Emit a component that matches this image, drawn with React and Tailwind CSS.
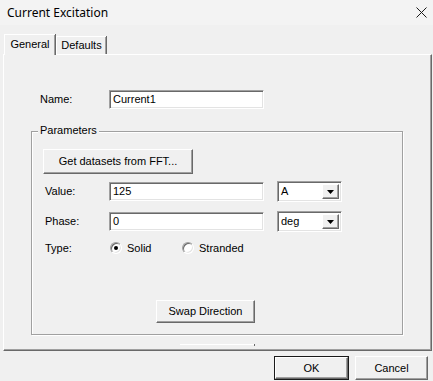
import React from 'react';

// classic win32 3D edges
const sunken = 'border border-t-[#a0a0a0] border-l-[#a0a0a0] border-b-white border-r-white shadow-[inset_1px_1px_0_#696969,inset_-1px_-1px_0_#e3e3e3]';
const raised = 'border border-t-white border-l-white border-b-[#696969] border-r-[#696969] shadow-[inset_-1px_-1px_0_#a0a0a0]';

const Button = ({ children, className = '' }) => (
  <div className={`flex items-center justify-center bg-[#f0f0f0] ${raised} ${className}`}>
    <span className="leading-none">{children}</span>
  </div>
);

const TextBox = ({ value, className = '' }) => (
  <div className={`flex items-center bg-white pl-[3px] ${sunken} ${className}`}>
    <span className="leading-none">{value}</span>
  </div>
);

const Combo = ({ value }) => (
  <div className={`flex h-[21px] w-[65px] items-center justify-between bg-white pl-[3px] pr-[2px] ${sunken}`}>
    <span className="leading-none text-[#000]">{value}</span>
    <div className={`flex h-[15px] w-[17px] items-center justify-center bg-[#f0f0f0] ${raised}`}>
      <svg width="7" height="4" viewBox="0 0 7 4">
        <polygon points="0,0 7,0 3.5,4" fill="#000" />
      </svg>
    </div>
  </div>
);

const Radio = ({ checked, label }) => (
  <div className="flex items-center gap-[5px]">
    <div className="flex h-[12px] w-[12px] items-center justify-center rounded-full border border-t-[#a0a0a0] border-l-[#a0a0a0] border-b-white border-r-white bg-white shadow-[inset_1px_1px_0_#696969,inset_-1px_-1px_0_#e3e3e3]">
      {checked && <div className="h-[4px] w-[4px] rounded-full bg-black" />}
    </div>
    <span className="leading-none">{label}</span>
  </div>
);

export default function App() {
  return (
    <div className="flex h-[381px] w-[433px] flex-col overflow-hidden bg-[#f0f0f0] text-[11px] text-black font-['Liberation_Sans',Arial,sans-serif]">
      {/* title bar */}
      <div className="flex h-[25px] items-center justify-between bg-[#f3f3f3] pl-[7px] pr-[6px]">
        <span className="text-[12px] font-['Noto_Sans','Open_Sans',sans-serif] leading-none">Current Excitation</span>
        <svg width="11" height="11" viewBox="0 0 11 11">
          <path d="M0.5 0.5 L10.5 10.5 M10.5 0.5 L0.5 10.5" stroke="#1a1a1a" strokeWidth="1" />
        </svg>
      </div>

      {/* tabs */}
      <div className="mt-[8px] flex h-[21px] items-end pl-[4px]">
        <div className="relative z-10 -mb-px flex h-[21px] w-[51px] items-start justify-center border-l border-t border-white bg-[#f0f0f0] pt-[4px] shadow-[inset_-1px_0_0_#a0a0a0,1px_0_0_#696969]">
          <span className="leading-none">General</span>
        </div>
        <div className="ml-px flex h-[18px] w-[50px] items-start justify-center border-l border-t border-white pt-[3px] shadow-[inset_-1px_0_0_#a0a0a0,1px_0_0_#696969]">
          <span className="leading-none">Defaults</span>
        </div>
      </div>

      {/* tab panel */}
      <div className="ml-[3px] flex h-[297px] w-[429px] flex-col border border-t-white border-l-white border-b-[#696969] border-r-[#696969] shadow-[inset_-1px_-1px_0_#a0a0a0]">
        <div className="mt-[35px] flex items-center pl-[36px]">
          <span className="w-[69px] leading-none">Name:</span>
          <TextBox value="Current1" className="h-[19px] w-[155px]" />
        </div>

        {/* Parameters group */}
        <div className="relative ml-[27px] mt-[22px] flex h-[204px] w-[372px] flex-col border border-[#a0a0a0] shadow-[1px_1px_0_#fff,inset_1px_1px_0_#fff]">
          <span className="absolute -top-[7px] left-[6px] bg-[#f0f0f0] px-[2px] leading-none">Parameters</span>

          <Button className="ml-[11px] mt-[17px] h-[25px] w-[150px]">Get datasets from FFT...</Button>

          <div className="ml-[13px] mt-[7px] flex h-[21px] items-center">
            <span className="w-[64px] leading-none">Value:</span>
            <TextBox value="125" className="h-[19px] w-[155px]" />
            <div className="ml-[13px]">
              <Combo value="A" />
            </div>
          </div>

          <div className="ml-[13px] mt-[9px] flex h-[21px] items-center">
            <span className="w-[64px] leading-none">Phase:</span>
            <TextBox value="0" className="h-[19px] w-[155px]" />
            <div className="ml-[13px]">
              <Combo value="deg" />
            </div>
          </div>

          <div className="ml-[13px] mt-[9px] flex h-[14px] items-center">
            <span className="w-[65px] leading-none">Type:</span>
            <div className="w-[72px]">
              <Radio checked label="Solid" />
            </div>
            <Radio label="Stranded" />
          </div>

          <Button className="ml-[124px] mt-[45px] h-[23px] w-[99px]">Swap Direction</Button>
        </div>

        {/* clipped control edge */}
        <div className="ml-[176px] mt-[9px] flex h-[2px] w-[75px] items-start">
          <div className="h-px flex-1 bg-white" />
          <div className="h-[2px] w-px bg-[#696969]" />
        </div>
      </div>

      {/* dialog buttons */}
      <div className="mt-[5px] flex justify-end gap-[6px] pr-[5px]">
        <div className="h-[24px] w-[75px] border border-[#1a1a1a]">
          <Button className="h-full w-full">OK</Button>
        </div>
        <Button className="h-[24px] w-[73px]">Cancel</Button>
      </div>
    </div>
  );
}
